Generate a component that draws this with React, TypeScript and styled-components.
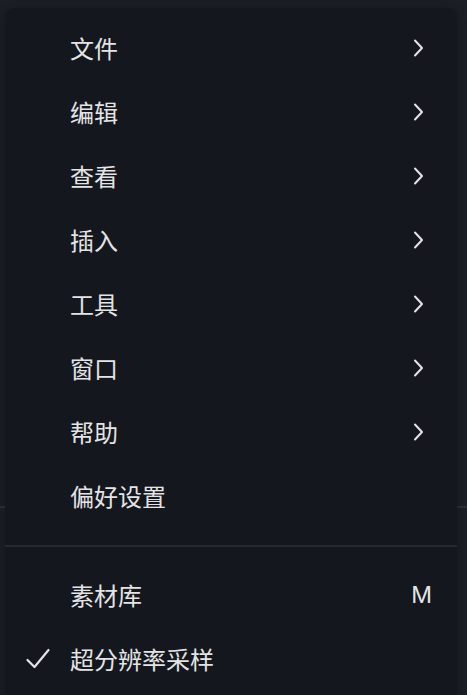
import styled, { createGlobalStyle } from "styled-components";

const GlobalStyle = createGlobalStyle`
  html, body {
    margin: 0;
    padding: 0;
    background: #1b1e25;
  }
  body {
    font-family: "Noto Sans CJK SC", "Noto Sans", sans-serif;
  }
`;

const Screen = styled.div`
  position: relative;
  width: 467px;
  height: 695px;
  overflow: hidden;
  background: #1b1e25;
`;

// the toolbar line of the page behind the menu
const BackDivider = styled.div`
  position: absolute;
  left: 0;
  right: 0;
  top: 506px;
  height: 2px;
  background: #2c2f36;
`;

const Menu = styled.ul`
  position: absolute;
  top: 8px;
  left: 5px;
  width: 452px;
  bottom: -20px;
  margin: 0;
  padding: 8px 0;
  list-style: none;
  background: #15171e;
  border-radius: 9px;
  box-shadow: 0 2px 10px rgba(0, 0, 0, 0.25);
`;

const Item = styled.li`
  position: relative;
  display: flex;
  align-items: center;
  height: 64px;
  padding: 0 32px 0 65px;
  color: #e4e4e6;
  font-size: 24px;
  line-height: 1;
`;

const Label = styled.span`
  flex: 1;
`;

const Shortcut = styled.span`
  font-family: "Inter", "Noto Sans", sans-serif;
  font-size: 23px;
  color: #e4e4e6;
  margin-right: -7px;
`;

const Check = styled.span`
  position: absolute;
  left: 20px;
  top: 50%;
  transform: translateY(-50%);
  display: flex;
`;

const Separator = styled.li`
  height: 35px;
  display: flex;
  align-items: center;

  &::after {
    content: "";
    display: block;
    width: 100%;
    height: 2px;
    background: #272a30;
  }
`;

const Chevron = () => (
  <svg width="12" height="18" viewBox="0 0 12 18" fill="none">
    <path
      d="M2 1.5 L9 9 L2 16.5"
      stroke="#e4e4e6"
      strokeWidth="2"
      strokeLinecap="round"
      strokeLinejoin="round"
    />
  </svg>
);

const CheckIcon = () => (
  <svg width="26" height="24" viewBox="0 0 26 24" fill="none">
    <path
      d="M2.5 13 L9.5 20 L23.5 3"
      stroke="#e4e4e6"
      strokeWidth="2.2"
      strokeLinecap="round"
      strokeLinejoin="round"
    />
  </svg>
);

const submenus = ["文件", "编辑", "查看", "插入", "工具", "窗口", "帮助"];

export default function App() {
  return (
    <>
      <GlobalStyle />
      <Screen>
        <BackDivider />
        <Menu>
          {submenus.map((name) => (
            <Item key={name}>
              <Label>{name}</Label>
              <Chevron />
            </Item>
          ))}
          <Item>
            <Label>偏好设置</Label>
          </Item>
          <Separator />
          <Item>
            <Label>素材库</Label>
            <Shortcut>M</Shortcut>
          </Item>
          <Item>
            <Check>
              <CheckIcon />
            </Check>
            <Label>超分辨率采样</Label>
          </Item>
        </Menu>
      </Screen>
    </>
  );
}
